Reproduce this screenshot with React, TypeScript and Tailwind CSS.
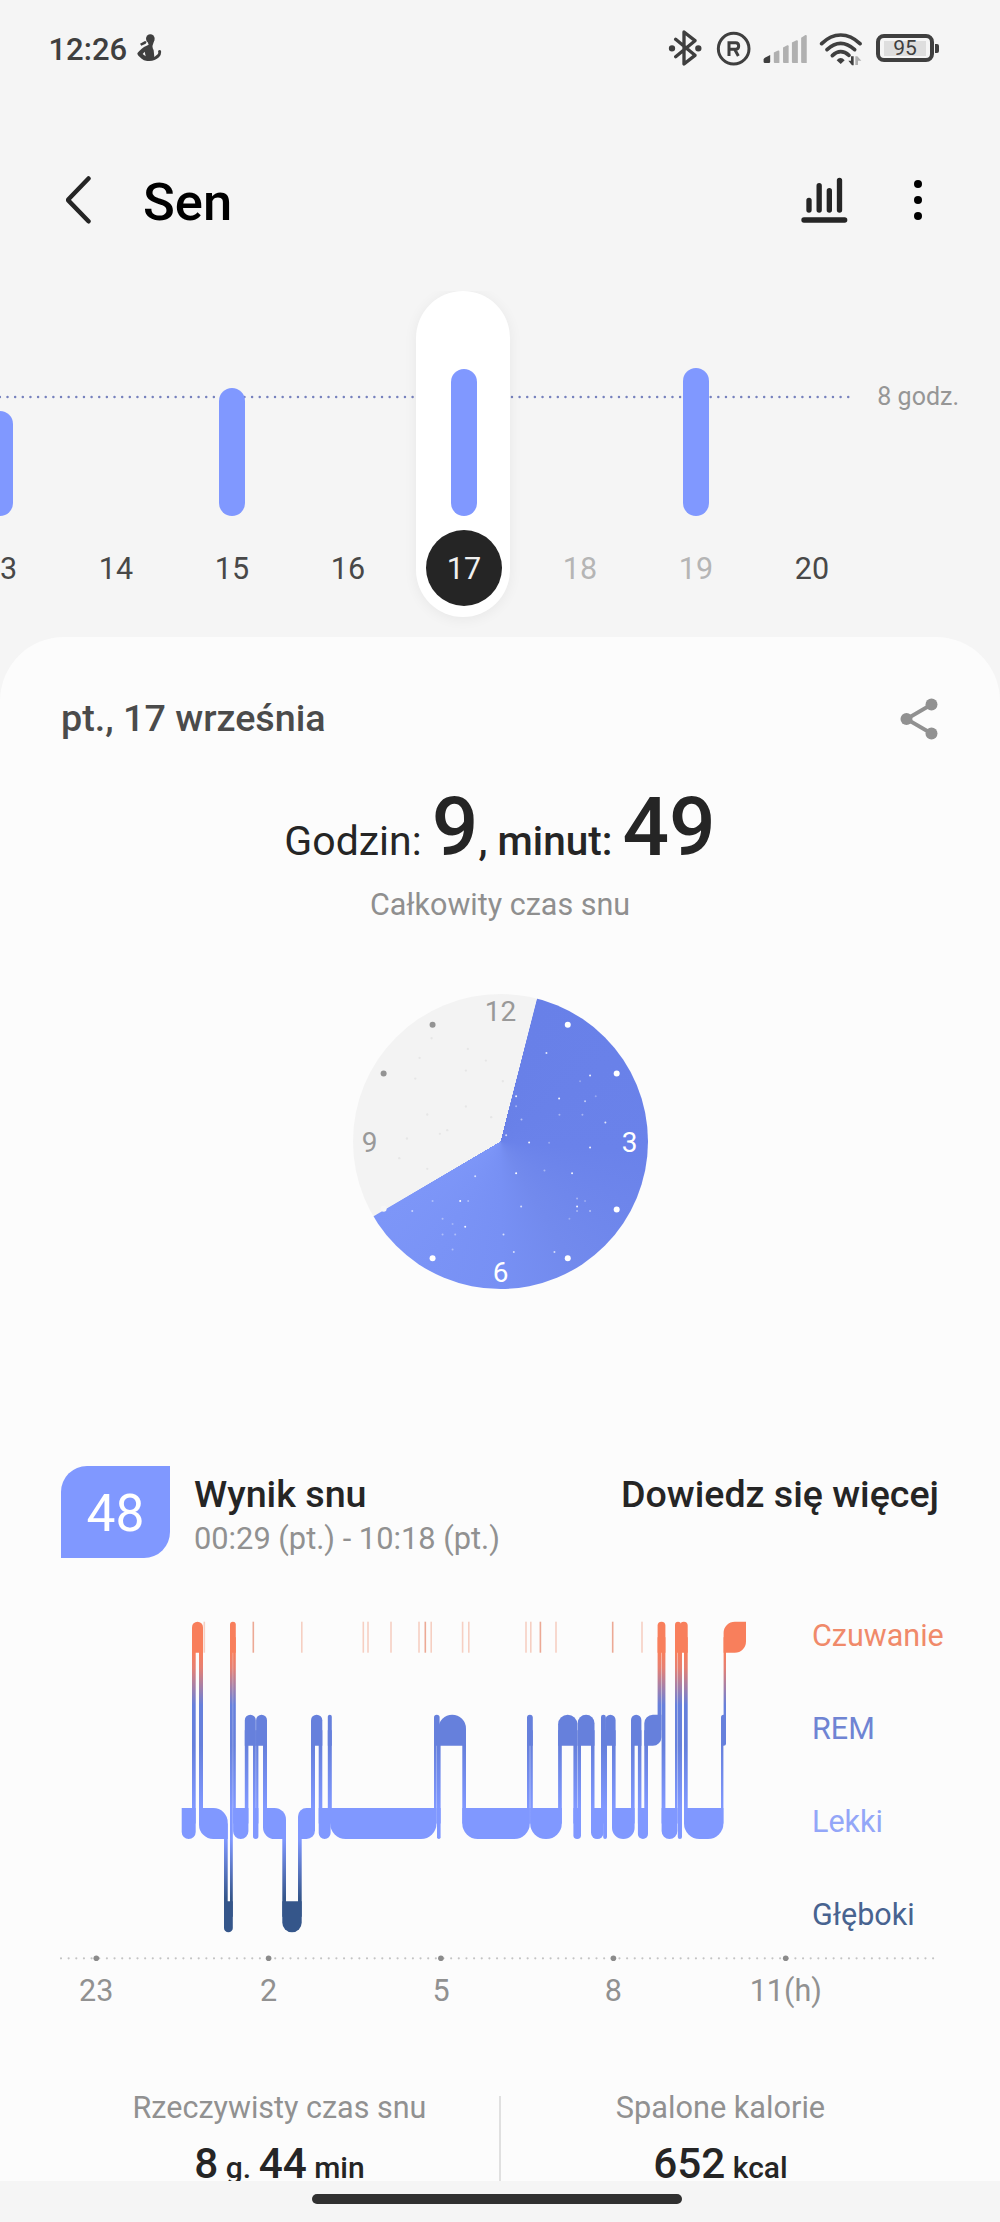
import React from "react";

/* ---------- status bar ---------- */

function StatusBar() {
  return (
    <div className="flex h-[97px] items-start pl-[48.5px] pt-[30px] text-[#3f3f3f]">
      <div className="mt-[4px] text-[31px] font-medium leading-none">12:26</div>
      <svg className="ml-[10px] mt-[4px] h-[27px] w-[25px]" viewBox="414 103 75 81" fill="#3f3f3f">
        <circle cx="454" cy="117" r="13" />
        <path d="M444 122 L466 122 L461 137 Q459 143 464 152 L466 172 L476 164 Q479 160 477 154 Q482 149 486 153 Q488 166 480 173 Q468 184 451 184 Q435 185 428 177 Q415 168 415 161 Q420 153 435 142 L449 135 Z" />
        <path d="M423 132 L438 124 L443 126 L440 132 L427 138 Z" />
        <path d="M431 163 L437 156 L440 170 Z" fill="#f5f5f5" />
      </svg>
      <div className="ml-auto flex items-start pr-[61px]">
        <svg className="h-[36px] w-[34px]" viewBox="504 90 102 108" fill="none" stroke="#3f3f3f" strokeWidth="10" strokeLinejoin="round" strokeLinecap="round">
          <path d="M527 118 L585 166 L552 192 L552 96 L585 122 L527 170" />
          <circle cx="516" cy="145" r="4.5" fill="#3f3f3f" />
          <circle cx="595" cy="145" r="4.5" fill="#3f3f3f" />
        </svg>
        <svg className="ml-[14px] mt-[1px] h-[35px] w-[35px]" viewBox="646 93 105 105" fill="none" stroke="#3f3f3f">
          <circle cx="699" cy="146" r="46" strokeWidth="9" />
          <path d="M685 168 V128 H705 Q714 128 714 138 Q714 148 705 148 H685 M702 148 L713 168" strokeWidth="9" />
        </svg>
        <svg className="ml-[12px] mt-[5px] h-[28px] w-[45px]" viewBox="789 104 135 85" fill="#b0b0b0">
          <path d="M790 178 Q790 174 810 165 V185 Q810 189 806 189 H794 Q790 189 790 185 Z" fill="#3f3f3f" />
          <path d="M821 157 L834 151 Q838 150 838 154 V189 H824 Q821 189 821 186 Z" />
          <path d="M849 142 L862 135 Q866 134 866 138 V189 H852 Q849 189 849 186 Z" />
          <path d="M876 127 L890 120 Q894 119 894 123 V189 H879 Q876 189 876 186 Z" />
          <path d="M904 112 L917 104 Q921 103 921 108 V189 H907 Q904 189 904 186 Z" />
        </svg>
        <svg className="ml-[11px] mt-[2px] h-[34px] w-[43px]" viewBox="957 95 129 102" fill="none" stroke="#3f3f3f" strokeWidth="11" strokeLinecap="round">
          <path d="M965 130 Q991 104 1022 104 Q1053 104 1080 130" />
          <path d="M981 148 Q1001 129 1022 129 Q1043 129 1064 148" />
          <path d="M997 166 Q1009 154 1022 154 Q1035 154 1047 165" />
          <path d="M1010 180 Q1022 166 1034 180 L1022 191 Z" fill="#3f3f3f" stroke="none" />
          <path d="M1061 168 V195 H1056 L1045 181 H1053 V168 Z" fill="#3f3f3f" stroke="none" />
          <path d="M1066 194 V168 H1072 L1084 181 H1074 V194 Z" fill="#b0b0b0" stroke="none" />
        </svg>
        <div className="ml-[14px] mt-[4px] flex items-center">
          <div className="flex h-[28px] w-[58px] items-center justify-center rounded-[8px] border-[4px] border-[#3f3f3f]">
            <div className="flex h-[15px] w-[42px] items-center justify-center bg-[#dedede] text-[21px] leading-none">95</div>
          </div>
          <div className="ml-[1px] h-[9px] w-[4px] rounded-r-[2px] bg-[#3f3f3f]" />
        </div>
      </div>
    </div>
  );
}

/* ---------- app bar ---------- */

function AppBar() {
  return (
    <div className="flex h-[194px] items-start pl-[64px] pr-[78px] pt-[79px]">
      <svg className="h-[48px] w-[30px]" viewBox="0 0 30 48" fill="none" stroke="#252525" strokeWidth="4.5" strokeLinecap="round" strokeLinejoin="round">
        <path d="M24.500 -0.500 L4.500 20.200 Q3.800 20.900 4.500 21.600 L24.500 42.300" transform="translate(0 3)" />
      </svg>
      <h1 className="ml-[49px] text-[52.5px] font-medium leading-none text-black">Sen</h1>
      <svg className="ml-auto h-[48px] w-[48px]" viewBox="0 0 144 144" stroke="#252525" strokeWidth="16" strokeLinecap="round">
        <path d="M27 73 V102 M57.500 29 V102 M88 44 V102 M118.500 13 V102 M12 132 H134" />
      </svg>
      <div className="ml-[66px] mt-[4px] flex flex-col gap-[8px]">
        <span className="size-[8px] rounded-full bg-black" />
        <span className="size-[8px] rounded-full bg-black" />
        <span className="size-[8px] rounded-full bg-black" />
      </div>
    </div>
  );
}

/* ---------- day strip ---------- */

const days = [
  { day: 13, height: 105.5, tone: "text-[#484848]" },
  { day: 14, height: 0, tone: "text-[#484848]" },
  { day: 15, height: 128.5, tone: "text-[#484848]" },
  { day: 16, height: 0, tone: "text-[#484848]" },
  { day: 17, height: 147, tone: "text-[#f0f0f0]", selected: true },
  { day: 18, height: 0, tone: "text-[#b5b5b5]" },
  { day: 19, height: 148, tone: "text-[#b5b5b5]" },
  { day: 20, height: 0, tone: "text-[#484848]" },
];

function DayStrip() {
  return (
    <div className="relative h-[346px] overflow-hidden">
      <svg className="absolute left-0 top-[104px] h-[4px] w-[852px]" viewBox="0 0 852 4">
        <path d="M-0.130 2 H849" stroke="#7681bd" strokeWidth="2.500" strokeLinecap="round" strokeDasharray="0 7.643" />
      </svg>
      <div className="absolute right-[41px] top-[93px] text-[25px] leading-none text-[#969696]">8 godz.</div>
      <div className="relative -ml-[58px] flex w-[928px]">
        {days.map((d) => (
          <div key={d.day} className="flex w-[116px] shrink-0 justify-center">
            <div
              className={
                d.selected
                  ? "-ml-[2px] flex h-[326px] w-[94px] flex-col items-center rounded-full bg-white pl-[2px] shadow-[0_2px_14px_rgba(0,0,0,0.06)]"
                  : "flex h-[326px] w-[94px] flex-col items-center"
              }
            >
              <div className="flex h-[225px] items-end">
                <div className="w-[26px] rounded-full bg-[#8098ff]" style={{ height: d.height }} />
              </div>
              <div
                className={
                  "mt-[14px] flex size-[76px] items-center justify-center rounded-full pt-[2px] text-[30.5px] leading-none " +
                  d.tone +
                  (d.selected ? " bg-[#252525]" : "")
                }
              >
                {d.day}
              </div>
            </div>
          </div>
        ))}
      </div>
    </div>
  );
}

/* ---------- clock ---------- */

const stars: [number, number, number][] = [
  [649, 247, 0.8], [780, 315, 0.9], [750, 332, 0.3], [687, 384, 0.9], [765, 392, 0.6], [797, 377, 0.3],
  [558, 377, 0.9], [558, 407, 0.4], [574, 447, 0.5], [688, 433, 0.4], [757, 433, 0.4], [826, 456, 0.8],
  [528, 494, 0.7], [597, 516, 0.9], [657, 517, 0.3], [780, 531, 0.9], [558, 608, 1], [643, 600, 0.4],
  [726, 608, 0.9], [435, 617, 0.7], [307, 692, 0.4], [390, 692, 1], [414, 692, 0.4], [246, 722, 0.6],
  [573, 708, 0.7], [741, 684, 0.4], [765, 692, 0.3], [741, 708, 0.9], [741, 722, 0.4], [780, 722, 0.5],
  [337, 745, 0.4], [367, 761, 0.3], [405, 769, 0.9], [337, 792, 0.4], [375, 792, 0.4], [520, 792, 0.7],
  [718, 745, 0.3], [367, 837, 0.4], [551, 845, 0.7], [673, 845, 0.7],
];

const faintStars = [
  [304, 203], [413, 235], [268, 262], [407, 300], [467, 270], [255, 324], [518, 332], [291, 432], [407, 408],
  [483, 440], [351, 479], [329, 490], [230, 504], [207, 563], [291, 595],
];

function SleepClock() {
  return (
    <div className="relative ml-[352.5px] mt-[74px] size-[295px] rounded-full bg-[conic-gradient(from_14.5deg,#6880e8_0deg,#6a82ea_80deg,#728aed_135deg,#7790f4_165deg,#7d96f8_224.800deg,#f3f3f3_225.200deg,#f3f3f3_359.700deg,#6880e8_360deg)]">
      <svg className="absolute inset-0 size-full" viewBox="68 70 886 886" fontFamily="Roboto, sans-serif" fontSize="84" textAnchor="middle">
        {stars.map(([x, y, o]) => (
          <circle key={`${x}-${y}`} cx={x} cy={y} r="3" fill="#fff" opacity={o} />
        ))}
        {faintStars.map(([x, y]) => (
          <circle key={`${x}-${y}`} cx={x} cy={y} r="3.5" fill="#e6e6e6" />
        ))}
        {[[713, 162], [860, 309], [860, 717], [713, 864], [307, 864]].map(([x, y]) => (
          <circle key={`${x}-${y}`} cx={x} cy={y} r="9" fill="#fff" />
        ))}
        {[[307, 162], [160, 309]].map(([x, y]) => (
          <circle key={`${x}-${y}`} cx={x} cy={y} r="9" fill="#939393" />
        ))}
        <circle cx="160" cy="715" r="9" fill="#f6f6f6" />
        <text x="511" y="152" fill="#999">12</text>
        <text x="118" y="544" fill="#999">9</text>
        <text x="899" y="546" fill="#fff">3</text>
        <text x="511" y="934" fill="#fff">6</text>
      </svg>
    </div>
  );
}

/* ---------- hypnogram ---------- */

const AWAKE = 1621.7;
const REM = 1714.7;
const LIGHT = 1808;
const DEEP = 1901.3;
const BLOCK = 31;

// Rounded corners: t = top left, T = top right, b = bottom left, B = bottom right.
type Block = [number, number, number, string];

const blocks: Block[] = [
  [LIGHT, 181.7, 195.7, "bB"],
  [AWAKE, 192, 203, "tT"],
  [LIGHT, 199, 227.7, "bT"],
  [DEEP, 224, 232.8, "bB"],
  [AWAKE, 230, 235.8, "tT"],
  [LIGHT, 233.1, 248.4, "bB"],
  [REM, 244.8, 255.8, "tT"],
  [LIGHT, 253, 258.4, "bB"],
  [REM, 256.1, 267, "tT"],
  [LIGHT, 263, 286, "bT"],
  [DEEP, 282.3, 301.7, "bB"],
  [LIGHT, 298, 315, "tB"],
  [REM, 311, 322.3, "tT"],
  [LIGHT, 318.7, 330.6, "bB"],
  [REM, 327.8, 331.8, "tT"],
  [LIGHT, 330.2, 436.5, "bB"],
  [REM, 434, 439.6, "tT"],
  [LIGHT, 437, 440.6, "bB"],
  [REM, 438.4, 466, "tT"],
  [LIGHT, 462.3, 529.8, "bB"],
  [REM, 527, 532.8, "tT"],
  [LIGHT, 530.2, 561.8, "bB"],
  [REM, 558.1, 577.3, "tT"],
  [LIGHT, 573.4, 581, "bB"],
  [REM, 577.6, 594.5, "tT"],
  [LIGHT, 591, 603.6, "bB"],
  [REM, 601, 605.8, "tT"],
  [LIGHT, 603.2, 607, "bB"],
  [REM, 605.2, 615.6, "tT"],
  [LIGHT, 612, 634.6, "bB"],
  [REM, 631, 641.4, "tT"],
  [LIGHT, 637.9, 648, "bB"],
  [REM, 644.3, 661.4, "tB"],
  [AWAKE, 657.6, 665.4, "tT"],
  [LIGHT, 661.6, 677.4, "bB"],
  [AWAKE, 675, 681, "tT"],
  [LIGHT, 677.8, 682, "bB"],
  [AWAKE, 680, 687.7, "tT"],
  [LIGHT, 684, 723.4, "bB"],
  [REM, 721, 726, "tB"],
  [AWAKE, 723.6, 746, "tB"],
];

// Thin uprights that join two stages: x1, x2, upper stage, lower stage.
const links: [number, number, number, number][] = [
  [192, 195.7, AWAKE, LIGHT],
  [199, 203, AWAKE, LIGHT],
  [224, 227.7, LIGHT, DEEP],
  [230, 232.8, AWAKE, DEEP],
  [233.1, 235.8, AWAKE, LIGHT],
  [244.8, 248.4, REM, LIGHT],
  [253, 255.8, REM, LIGHT],
  [256.1, 258.4, REM, LIGHT],
  [263, 267, REM, LIGHT],
  [282.3, 286, LIGHT, DEEP],
  [298, 301.7, LIGHT, DEEP],
  [311, 315, REM, LIGHT],
  [318.7, 322.3, REM, LIGHT],
  [327.8, 331.8, REM, LIGHT],
  [434, 436.7, REM, LIGHT],
  [437, 440.6, REM, LIGHT],
  [462.3, 466, REM, LIGHT],
  [527, 529.8, REM, LIGHT],
  [530.2, 532.8, REM, LIGHT],
  [558.1, 561.8, REM, LIGHT],
  [573.4, 577.3, REM, LIGHT],
  [577.6, 581, REM, LIGHT],
  [591, 594.5, REM, LIGHT],
  [601, 607, REM, LIGHT],
  [612, 615.6, REM, LIGHT],
  [631, 634.6, REM, LIGHT],
  [637.9, 641.4, REM, LIGHT],
  [644.3, 648, REM, LIGHT],
  [657.6, 661.3, AWAKE, REM],
  [661.6, 665.4, AWAKE, LIGHT],
  [675, 677.5, AWAKE, LIGHT],
  [677.8, 682, AWAKE, LIGHT],
  [684, 687.7, AWAKE, LIGHT],
  [721, 723.4, REM, LIGHT],
  [723.6, 726, AWAKE, REM],
];

const ticks: [number, boolean][] = [
  [204.3, false], [253.3, true], [301.8, false], [363.3, false], [368, false], [391, false], [419, false],
  [425.3, true], [431.2, false], [462.6, false], [468.8, false], [526, false], [530.8, false], [540.4, true],
  [556, false], [612.7, true], [642, false],
];

function blockPath([y, x1, x2, corners]: Block) {
  const r = Math.min((x2 - x1) / 2, 15.5);
  const has = (c: string) => (corners.includes(c) ? r : 0);
  const [tl, tr, br, bl] = [has("t"), has("T"), has("B"), has("b")];
  const b = y + BLOCK;
  return `M${x1 + tl} ${y}H${x2 - tr}A${tr} ${tr} 0 0 1 ${x2} ${y + tr}V${b - br}A${br} ${br} 0 0 1 ${x2 - br} ${b}H${x1 + bl}A${bl} ${bl} 0 0 1 ${x1} ${b - bl}V${y + tl}A${tl} ${tl} 0 0 1 ${x1 + tl} ${y}Z`;
}

function Hypnogram() {
  return (
    <>
      <div className="mt-[42px] flex">
        <svg className="h-[345px] w-[812px] shrink-0" viewBox="0 1600 812 345">
          <defs>
            <linearGradient id="stage" gradientUnits="userSpaceOnUse" x1="0" y1="1621" x2="0" y2="1933">
              <stop offset="0.1" stopColor="#f87f5c" />
              <stop offset="0.15" stopColor="#e68073" />
              <stop offset="0.27" stopColor="#6680dc" />
              <stop offset="0.4" stopColor="#6680dc" />
              <stop offset="0.6" stopColor="#8098ff" />
              <stop offset="0.7" stopColor="#8098ff" />
              <stop offset="0.89" stopColor="#35568a" />
            </linearGradient>
          </defs>
          {ticks.map(([x, strong]) => (
            <rect key={x} x={x - 0.8} y={AWAKE} width="1.6" height={BLOCK} fill={strong ? "#eca995" : "#f6cfc2"} />
          ))}
          <g fill="url(#stage)">
            {links.map(([x1, x2, from, to]) => (
              <rect key={x1} x={x1} y={from + 15.5} width={x2 - x1} height={to - from} />
            ))}
            {blocks.map((b) => (
              <path key={b[1]} d={blockPath(b)} />
            ))}
          </g>
        </svg>
        <div className="flex flex-col pt-[21px] text-[30.5px] leading-none">
          <div className="h-[93px] text-[#f08a6a]">Czuwanie</div>
          <div className="h-[93px] text-[#6f84d3]">REM</div>
          <div className="h-[93px] text-[#93a6f8]">Lekki</div>
          <div className="text-[#486390]">Głęboki</div>
        </div>
      </div>
      <svg className="mt-[8px] block h-[10px] w-[1000px]" viewBox="0 0 1000 10">
        <path d="M61 5.300 H935" stroke="#c4c4c4" strokeWidth="2.200" strokeLinecap="round" strokeDasharray="0 7.650" />
        {[96.3, 268.6, 440.9, 613.4, 785.7].map((x) => (
          <circle key={x} cx={x} cy="5.300" r="2.800" fill="#8b8b8b" />
        ))}
      </svg>
      <div className="ml-[10px] mt-[13px] flex text-[30.5px] leading-none text-[#919191]">
        {["23", "2", "5", "8", "11(h)"].map((h) => (
          <div key={h} className="w-[172.4px] text-center">{h}</div>
        ))}
      </div>
    </>
  );
}

/* ---------- page ---------- */

export default function App() {
  return (
    <div className="h-[2222px] w-[1000px] overflow-hidden bg-[#f5f5f5] font-['Roboto',sans-serif]">
      <StatusBar />
      <AppBar />
      <DayStrip />
      <main className="h-[1544px] overflow-hidden rounded-t-[64px] bg-[#fcfcfc] text-[#252525]">
        <div className="flex h-[102px] items-center justify-between pl-[61px] pr-[62px] pt-[61px]">
          <h2 className="text-[37.7px] font-medium leading-none text-[#4b4b4b]">pt., 17 września</h2>
          <svg className="h-[42px] w-[38px]" viewBox="0 0 38 42" fill="#919191" stroke="#919191">
            <path d="M31.500 6.500 L6.500 21 L31.500 35.500" fill="none" strokeWidth="3.800" />
            <circle cx="31.500" cy="6.500" r="6" stroke="none" />
            <circle cx="6.500" cy="21" r="6" stroke="none" />
            <circle cx="31.500" cy="35.500" r="6" stroke="none" />
          </svg>
        </div>
        <div className="mt-[47px] flex h-[82px] items-baseline justify-center whitespace-pre text-[40.5px] leading-none">
          <span className="text-[41px]">Godzin: </span>
          <span className="text-[82px] font-medium">9</span>
          <span className="font-medium">, minut: </span>
          <span className="text-[82px] font-medium">49</span>
        </div>
        <div className="mt-[21px] h-[31px] text-center text-[30.5px] leading-[31px] text-[#8f8f8f]">Całkowity czas snu</div>
        <SleepClock />
        <div className="mt-[177px] flex h-[92px] items-start pl-[61px] pr-[61px]">
          <div className="flex h-[92px] w-[109px] items-center justify-center rounded-br-[26px] rounded-tl-[26px] bg-[#8098ff] pt-[4px] text-[51.5px] leading-none text-white">
            48
          </div>
          <div className="ml-[24px] mt-[9px]">
            <div className="text-[37.7px] font-medium leading-[38px]">Wynik snu</div>
            <div className="mt-[10px] text-[30.8px] leading-[31px] text-[#919191]">00:29 (pt.) - 10:18 (pt.)</div>
          </div>
          <div className="ml-auto mt-[9px] text-[37.6px] font-medium leading-[38px]">Dowiedz się więcej</div>
        </div>
        <Hypnogram />
        <div className="mx-[60px] mt-[85px] flex">
          <div className="flex-1 text-center">
            <div className="text-[30.5px] leading-[31px] text-[#919191]">Rzeczywisty czas snu</div>
            <div className="mt-[20px] text-[42.3px] font-medium leading-[42px]">
              8<span className="text-[30px]"> g. </span>44<span className="text-[30px]"> min</span>
            </div>
          </div>
          <div className="mt-[4px] w-[2px] bg-[#e0e0e0]" />
          <div className="flex-1 text-center">
            <div className="text-[30.7px] leading-[31px] text-[#919191]">Spalone kalorie</div>
            <div className="mt-[20px] text-[42.3px] font-medium leading-[42px]">
              652<span className="text-[30px]"> kcal</span>
            </div>
          </div>
        </div>
      </main>
      <div className="flex h-[41px] justify-center pr-[6px] pt-[13px]">
        <div className="h-[10px] w-[370px] rounded-full bg-[#303030]" />
      </div>
    </div>
  );
}
